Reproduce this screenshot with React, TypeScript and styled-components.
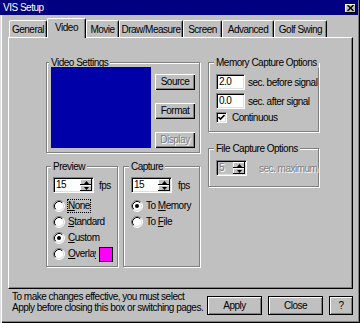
import React from "react";
import styled, { createGlobalStyle } from "styled-components";

const FACE = "#c0c0c0";
const SHADOW = "#808080";
const LIGHT = "#dfdfdf";

const GlobalStyle = createGlobalStyle`
  * { box-sizing: border-box; }
  html, body { margin: 0; padding: 0; background: ${FACE}; }
  body {
    font-family: "Liberation Sans", Arial, sans-serif;
    font-size: 10px;
    letter-spacing: -0.5px;
    color: #000;
  }
`;

const Window = styled.div`
  width: 360px;
  height: 323px;
  display: flex;
  flex-direction: column;
  background: ${FACE};
  box-shadow: inset 1px 0 0 ${LIGHT}, inset 2px 0 0 #fff, inset -1px -1px 0 #000,
    inset -2px -2px 0 ${SHADOW};
`;

const TitleBar = styled.div`
  height: 15px;
  margin-right: 2px;
  padding: 1px 2px 0 3px;
  display: flex;
  align-items: center;
  background: #000080;
  color: #fff;
  line-height: 12px;
`;

const TitleText = styled.span`
  flex: 1;
`;

const CloseBox = styled.span`
  width: 11px;
  height: 9px;
  display: flex;
  align-items: center;
  justify-content: center;
  background: ${FACE};
  box-shadow: inset -1px -1px 0 #000, inset 1px 1px 0 #fff;
`;

const Body = styled.div`
  padding: 3px 0 0 8px;
  display: flex;
  flex-direction: column;
`;

const TabStrip = styled.div`
  height: 19px;
  padding-left: 1px;
  display: flex;
  align-items: flex-end;
`;

const Tab = styled.div<{ $w: number; $active?: boolean }>`
  position: relative;
  z-index: ${p => (p.$active ? 1 : 0)};
  width: ${p => p.$w}px;
  height: ${p => (p.$active ? 20 : 17)}px;
  margin-bottom: ${p => (p.$active ? -1 : 0)}px;
  padding-top: 3px;
  text-align: center;
  line-height: 12px;
  white-space: nowrap;
  background: ${FACE};
  border-top: 1px solid #fff;
  border-left: 1px solid #fff;
  border-right: 1px solid #000;
  border-radius: 2px 2px 0 0;
  box-shadow: inset -1px 0 0 ${SHADOW};
`;

const Panel = styled.div`
  width: 345px;
  height: 252px;
  padding: 19px 0 0 37px;
  display: flex;
  gap: 8px;
  border: 1px solid;
  border-color: #fff #000 #000 #fff;
  box-shadow: inset -1px -1px 0 ${SHADOW};
`;

const Column = styled.div<{ $w: number; $gap: number }>`
  width: ${p => p.$w}px;
  display: flex;
  flex-direction: column;
  gap: ${p => p.$gap}px;
`;

const Row = styled.div<{ $gap: number }>`
  display: flex;
  gap: ${p => p.$gap}px;
`;

const Group = styled.fieldset<{ $w: number; $h: number; $pad: number }>`
  margin: 0;
  min-width: 0;
  width: ${p => p.$w}px;
  height: ${p => p.$h}px;
  padding: 0 0 0 ${p => p.$pad}px;
  border: 1px solid ${SHADOW};
  box-shadow: 1px 1px 0 #fff, inset 1px 1px 0 #fff;
`;

const Caption = styled.legend`
  margin-left: -2px;
  padding: 0 2px;
  line-height: 11px;
  white-space: nowrap;
  background: ${FACE};
`;

const VideoRow = styled.div`
  display: flex;
  gap: 4px;
  margin-top: -1px;
`;

const Monitor = styled.div`
  width: 100px;
  height: 81px;
  background: #0000a8;
`;

const ButtonStack = styled.div`
  display: flex;
  flex-direction: column;
  gap: 13px;
  padding-top: 7px;
`;

const Button = styled.button<{ $w: number; $h: number; $framed?: boolean }>`
  width: ${p => p.$w}px;
  height: ${p => p.$h}px;
  padding: 0;
  font: inherit;
  letter-spacing: inherit;
  line-height: 12px;
  color: #000;
  background: ${FACE};
  border: ${p => (p.$framed ? "1px solid #000" : "none")};
  box-shadow: ${p =>
    p.$framed
      ? `inset 1px 1px 0 #fff, inset -1px -1px 0 ${SHADOW}`
      : `inset 1px 1px 0 #fff, inset -1px -1px 0 #000, inset -2px -2px 0 ${SHADOW}`};

  &:disabled {
    color: ${SHADOW};
    text-shadow: 1px 1px 0 #fff;
  }
`;

const FieldRow = styled.div<{ $gap: number; $top: number }>`
  display: flex;
  align-items: center;
  gap: ${p => p.$gap}px;
  margin-top: ${p => p.$top}px;
`;

const Field = styled.div<{ $w: number; $disabled?: boolean }>`
  flex: none;
  width: ${p => p.$w}px;
  height: 16px;
  padding: 1px;
  display: flex;
  background: ${p => (p.$disabled ? FACE : "#fff")};
  border: 1px solid;
  border-color: ${SHADOW} #fff #fff ${SHADOW};
  box-shadow: inset 1px 1px 0 #000, inset -1px -1px 0 ${LIGHT};
`;

const FieldText = styled.span<{ $disabled?: boolean }>`
  flex: 1;
  min-width: 0;
  padding-left: 1px;
  line-height: 12px;
  color: ${p => (p.$disabled ? SHADOW : "#000")};
  text-shadow: ${p => (p.$disabled ? "1px 1px 0 #fff" : "none")};
`;

const SpinButtons = styled.div`
  flex: none;
  width: 12px;
  display: flex;
  flex-direction: column;
`;

const SpinButton = styled.div`
  flex: 1;
  display: flex;
  align-items: center;
  justify-content: center;
  background: ${FACE};
  box-shadow: inset -1px -1px 0 #000, inset 1px 1px 0 #fff;
`;

const Hint = styled.span<{ $disabled?: boolean; $left?: number }>`
  margin-left: ${p => p.$left ?? 0}px;
  white-space: nowrap;
  color: ${p => (p.$disabled ? SHADOW : "#000")};
  text-shadow: ${p => (p.$disabled ? "1px 1px 0 #fff" : "none")};
`;

const OptionList = styled.div`
  display: flex;
  flex-direction: column;
  margin-top: 5px;
`;

const Option = styled.div`
  height: 16px;
  display: flex;
  align-items: center;
`;

const OptionLabel = styled.span<{ $focus?: boolean; $clip?: number }>`
  margin-left: 2px;
  ${p => (p.$clip ? `width: ${p.$clip}px; overflow: hidden;` : "")}
  border: 1px ${p => (p.$focus ? "dotted #000" : "solid transparent")};
  line-height: 12px;
  white-space: nowrap;
`;

const CheckBox = styled.span`
  width: 11px;
  height: 11px;
  display: flex;
  align-items: center;
  justify-content: center;
  background: #fff;
  border: 1px solid;
  border-color: ${SHADOW} #fff #fff ${SHADOW};
  box-shadow: inset 1px 1px 0 #000, inset -1px -1px 0 ${LIGHT};
`;

const Swatch = styled.span`
  width: 14px;
  height: 15px;
  margin-left: 2px;
  background: #ff00ff;
  border: 1px solid #000;
`;

const Footer = styled.div`
  width: 345px;
  padding: 2px 0 0 4px;
  display: flex;
`;

const Note = styled.p`
  flex: 1;
  margin: 0;
  line-height: 11px;
  white-space: nowrap;
`;

const FooterButtons = styled.div`
  display: flex;
  gap: 6px;
  margin-top: 5px;
`;

const Arrow = ({ up }: { up?: boolean }) => (
  <svg width="5" height="3" viewBox="0 0 5 3">
    <polygon points={up ? "2.5,0 5,3 0,3" : "0,0 5,0 2.5,3"} fill="#000" />
  </svg>
);

const Spin = ({ value, w, disabled }: { value: string; w: number; disabled?: boolean }) => (
  <Field $w={w} $disabled={disabled}>
    <FieldText $disabled={disabled}>{value}</FieldText>
    <SpinButtons>
      <SpinButton>
        <Arrow up />
      </SpinButton>
      <SpinButton>
        <Arrow />
      </SpinButton>
    </SpinButtons>
  </Field>
);

const RadioMark = ({ checked }: { checked?: boolean }) => (
  <svg width="12" height="12" viewBox="0 0 12 12">
    <circle cx="6" cy="6" r="5" fill="#fff" />
    <path d="M2.11 9.89 A5.5 5.5 0 0 1 9.89 2.11" stroke={SHADOW} fill="none" />
    <path d="M9.89 2.11 A5.5 5.5 0 0 1 2.11 9.89" stroke="#fff" fill="none" />
    <path d="M2.82 9.18 A4.5 4.5 0 0 1 9.18 2.82" stroke="#000" fill="none" />
    <path d="M9.18 2.82 A4.5 4.5 0 0 1 2.82 9.18" stroke={LIGHT} fill="none" />
    {checked && <circle cx="6" cy="6" r="2" fill="#000" />}
  </svg>
);

const tabs: [string, number][] = [
  ["General", 38],
  ["Video", 39],
  ["Movie", 33],
  ["Draw/Measure", 64],
  ["Screen", 39],
  ["Advanced", 52],
  ["Golf Swing", 53],
];

export default function App() {
  return (
    <>
      <GlobalStyle />
      <Window>
        <TitleBar>
          <TitleText>VIS Setup</TitleText>
          <CloseBox>
            <svg width="7" height="6" viewBox="0 0 7 6">
              <path d="M0.5 0 L6.5 6 M6.5 0 L0.5 6" stroke="#000" strokeWidth="1.4" />
            </svg>
          </CloseBox>
        </TitleBar>
        <Body>
          <TabStrip>
            {tabs.map(([name, w]) => (
              <Tab key={name} $w={w} $active={name === "Video"}>
                {name}
              </Tab>
            ))}
          </TabStrip>
          <Panel>
            <Column $w={154} $gap={8}>
              <Group $w={154} $h={96} $pad={4}>
                <Caption>Video Settings</Caption>
                <VideoRow>
                  <Monitor />
                  <ButtonStack>
                    <Button $w={40} $h={16}>Source</Button>
                    <Button $w={40} $h={16}>Format</Button>
                    <Button $w={40} $h={16} disabled>
                      Display
                    </Button>
                  </ButtonStack>
                </VideoRow>
              </Group>
              <Row $gap={5}>
                <Group $w={72} $h={106} $pad={6}>
                  <Caption>Preview</Caption>
                  <FieldRow $gap={5} $top={5}>
                    <Spin value="15" w={41} />
                    <Hint>fps</Hint>
                  </FieldRow>
                  <OptionList>
                    <Option>
                      <RadioMark />
                      <OptionLabel $focus>
                        <u>N</u>one
                      </OptionLabel>
                    </Option>
                    <Option>
                      <RadioMark />
                      <OptionLabel>
                        <u>S</u>tandard
                      </OptionLabel>
                    </Option>
                    <Option>
                      <RadioMark checked />
                      <OptionLabel>
                        <u>C</u>ustom
                      </OptionLabel>
                    </Option>
                    <Option>
                      <RadioMark />
                      <OptionLabel $clip={30}>
                        <u>O</u>verlay
                      </OptionLabel>
                      <Swatch />
                    </Option>
                  </OptionList>
                </Group>
                <Group $w={77} $h={106} $pad={7}>
                  <Caption>Capture</Caption>
                  <FieldRow $gap={6} $top={5}>
                    <Spin value="15" w={41} />
                    <Hint>fps</Hint>
                  </FieldRow>
                  <OptionList>
                    <Option>
                      <RadioMark checked />
                      <OptionLabel>
                        To <u>M</u>emory
                      </OptionLabel>
                    </Option>
                    <Option>
                      <RadioMark />
                      <OptionLabel>
                        To <u>F</u>ile
                      </OptionLabel>
                    </Option>
                  </OptionList>
                </Group>
              </Row>
            </Column>
            <Column $w={111} $gap={11}>
              <Group $w={111} $h={75} $pad={7}>
                <Caption>Memory Capture Options</Caption>
                <FieldRow $gap={3} $top={6}>
                  <Field $w={29}>
                    <FieldText>2.0</FieldText>
                  </Field>
                  <Hint>sec. before signal</Hint>
                </FieldRow>
                <FieldRow $gap={3} $top={3}>
                  <Field $w={29}>
                    <FieldText>0.0</FieldText>
                  </Field>
                  <Hint>sec. after signal</Hint>
                </FieldRow>
                <FieldRow $gap={5} $top={3}>
                  <CheckBox>
                    <svg width="7" height="7" viewBox="0 0 7 7">
                      <polyline points="0.5,3 2.5,5 6.5,1" stroke="#000" strokeWidth="1.6" fill="none" />
                    </svg>
                  </CheckBox>
                  <Hint>Continuous</Hint>
                </FieldRow>
              </Group>
              <Group $w={111} $h={44} $pad={7}>
                <Caption>File Capture Options</Caption>
                <FieldRow $gap={0} $top={6}>
                  <Spin value="5" w={31} disabled />
                  <Hint $disabled $left={12}>
                    sec. maximum
                  </Hint>
                </FieldRow>
              </Group>
            </Column>
          </Panel>
          <Footer>
            <Note>
              To make changes effective, you must select
              <br />
              Apply before closing this box or switching pages.
            </Note>
            <FooterButtons>
              <Button $w={55} $h={19} $framed>
                Apply
              </Button>
              <Button $w={55} $h={19} $framed>
                Close
              </Button>
              <Button $w={24} $h={19} $framed>
                ?
              </Button>
            </FooterButtons>
          </Footer>
        </Body>
      </Window>
    </>
  );
}
